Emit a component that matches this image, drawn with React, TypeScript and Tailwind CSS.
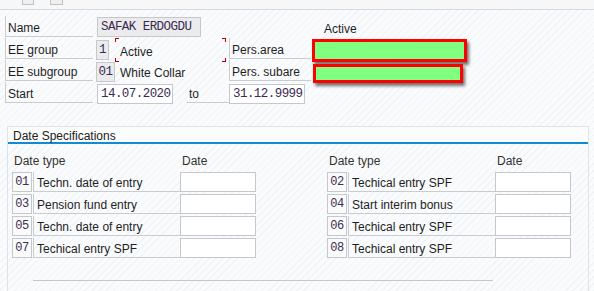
const ROWS_LEFT = [
  { no: '01', text: 'Techn. date of entry' },
  { no: '03', text: 'Pension fund entry' },
  { no: '05', text: 'Techn. date of entry' },
  { no: '07', text: 'Techical entry SPF' },
];

const ROWS_RIGHT = [
  { no: '02', text: 'Techical entry SPF' },
  { no: '04', text: 'Start interim bonus' },
  { no: '06', text: 'Techical entry SPF' },
  { no: '08', text: 'Techical entry SPF' },
];

const MONO = "font-['Liberation_Mono',monospace] text-[12.5px] tracking-[-0.55px] text-[#3a2b55]";

function Label({ w, children }: { w: string; children?: React.ReactNode }) {
  return (
    <div className={`${w} h-full flex items-center pl-[2px] pt-[4px] border-l border-b border-[#c9cdd1] whitespace-nowrap`}>
      {children}
    </div>
  );
}

function DateCol({ rows }: { rows: { no: string; text: string }[] }) {
  return (
    <div className="w-[244px] flex flex-col">
      {/* headers */}
      <div className="h-[18px] flex items-center text-[#333]">
        <span className="w-[168px] pl-[2px]">Date type</span>
        <span className="pl-[2px]">Date</span>
      </div>
      <div className="flex flex-col gap-[2px] mt-[2px]">
        {rows.map(r => (
          <div key={r.no} className="h-[20px] flex">
            <div className="w-[20px] h-[20px] border border-[#c4c8cc] bg-[#fafafa] flex items-center justify-center font-['Liberation_Mono',monospace] text-[12px] tracking-[-0.5px] text-[#3a2f50]">
              {r.no}
            </div>
            <div className="ml-[1px] w-[147px] h-[20px] border-l border-b border-[#c9cdd1] pl-[3px] flex items-center pt-[2px] whitespace-nowrap">
              {r.text}
            </div>
            <div className="w-[76px] h-[20px] border border-[#c4c8cc] bg-white" />
          </div>
        ))}
      </div>
    </div>
  );
}

export default function App() {
  return (
    <div className="w-[594px] h-[291px] overflow-hidden bg-[repeating-linear-gradient(135deg,#f1f4f6_0px,#f1f4f6_1px,#fafbfc_1px,#fafbfc_5px)] font-['Liberation_Sans',Arial,sans-serif] text-[12px] text-[#1f1f1f]">
      {/* toolbar stub */}
      <div className="h-[10px] border-b border-[#d8dbde] bg-[#f7f7f7] flex">
        <div className="ml-[22px] w-[12px] h-[5px] border border-t-0 border-[#c2c2c2] bg-[#efefef]" />
        <div className="ml-[16px] w-[13px] h-[5px] border border-t-0 border-[#c2c2c2] bg-[#efefef]" />
      </div>

      {/* header fields */}
      <div className="pl-[5px] pt-[6px] flex flex-col gap-[1px]">
        {/* Name */}
        <div className="h-[21px] flex">
          <Label w="w-[88px]">Name</Label>
          <div className={`ml-[4px] mt-[1px] w-[104px] h-[20px] border border-[#c4c8cc] bg-[#ebebeb] pl-[3px] flex items-center ${MONO}`}>
            SAFAK ERDOGDU
          </div>
          <div className="ml-[123px] flex items-center pt-[4px]">Active</div>
        </div>

        {/* EE group */}
        <div className="h-[21px] flex">
          <Label w="w-[88px]">EE group</Label>
          <div className={`ml-[3px] mt-[2px] w-[13px] h-[20px] border border-[#c4c8cc] bg-[#ebebeb] flex items-center justify-center ${MONO}`}>
            1
          </div>
          <div className="relative ml-[6px] w-[111px] h-[24px] flex items-center pl-[5px] pt-[3px]">
            Active
            <span className="absolute left-0 top-0 w-[4px] h-[4px] border-l border-t border-[#c40000]" />
            <span className="absolute left-0 bottom-0 w-[4px] h-[4px] border-l border-b border-[#c40000]" />
            <span className="absolute right-0 top-0 w-[4px] h-[4px] border-r border-t border-[#c40000]" />
            <span className="absolute right-0 bottom-0 w-[4px] h-[4px] border-r border-b border-[#c40000]" />
          </div>
          <Label w="w-[82px] ml-[3px]">Pers.area</Label>
          <div className="ml-[1px] mt-[1px] w-[155px] h-[23px] border-[3px] border-[#ff0000] bg-[#80ff80] shadow-[2px_3px_3px_rgba(0,0,0,0.55)]" />
        </div>

        {/* EE subgroup */}
        <div className="h-[21px] flex">
          <Label w="w-[88px]">EE subgroup</Label>
          <div className={`ml-[3px] mt-[2px] w-[19px] h-[20px] border border-[#c4c8cc] bg-[#ebebeb] flex items-center justify-center ${MONO}`}>
            01
          </div>
          <div className="w-[114px] pl-[5px] flex items-center pt-[4px] whitespace-nowrap">White Collar</div>
          <Label w="w-[82px]">Pers. subare</Label>
          <div className="ml-[2px] mt-[4px] w-[150px] h-[19px] border-[3px] border-[#ff0000] bg-[#80ff80] shadow-[2px_3px_3px_rgba(0,0,0,0.55)]" />
        </div>

        {/* Start */}
        <div className="h-[21px] flex">
          <Label w="w-[88px]">Start</Label>
          <div className={`ml-[4px] mt-[2px] w-[76px] h-[20px] border border-[#c4c8cc] bg-white pl-[3px] flex items-center ${MONO}`}>
            14.07.2020
          </div>
          <div className="ml-[14px] w-[42px] h-full flex items-center pl-[2px] pt-[4px] border-b border-[#c9cdd1]">to</div>
          <div className={`mt-[2px] w-[76px] h-[20px] border border-[#c4c8cc] bg-white pl-[3px] flex items-center ${MONO}`}>
            31.12.9999
          </div>
        </div>
      </div>

      {/* Date Specifications group */}
      <div className="mt-[23px] ml-[7px] w-[582px] h-[200px] border border-b-0 border-[#dfe3e6]">
        <div className="h-[17px] border-b-2 border-[#118bd1] bg-[#fbfcfc] pl-[5px] flex items-center pt-[3px] text-[#222]">
          Date Specifications
        </div>
        <div className="pl-[4px] pt-[8px] flex gap-[71px]">
          <DateCol rows={ROWS_LEFT} />
          <DateCol rows={ROWS_RIGHT} />
        </div>
        <div className="mt-[22px] ml-[25px] w-[460px] border-t border-[#c4c8cc]" />
      </div>
    </div>
  );
}
